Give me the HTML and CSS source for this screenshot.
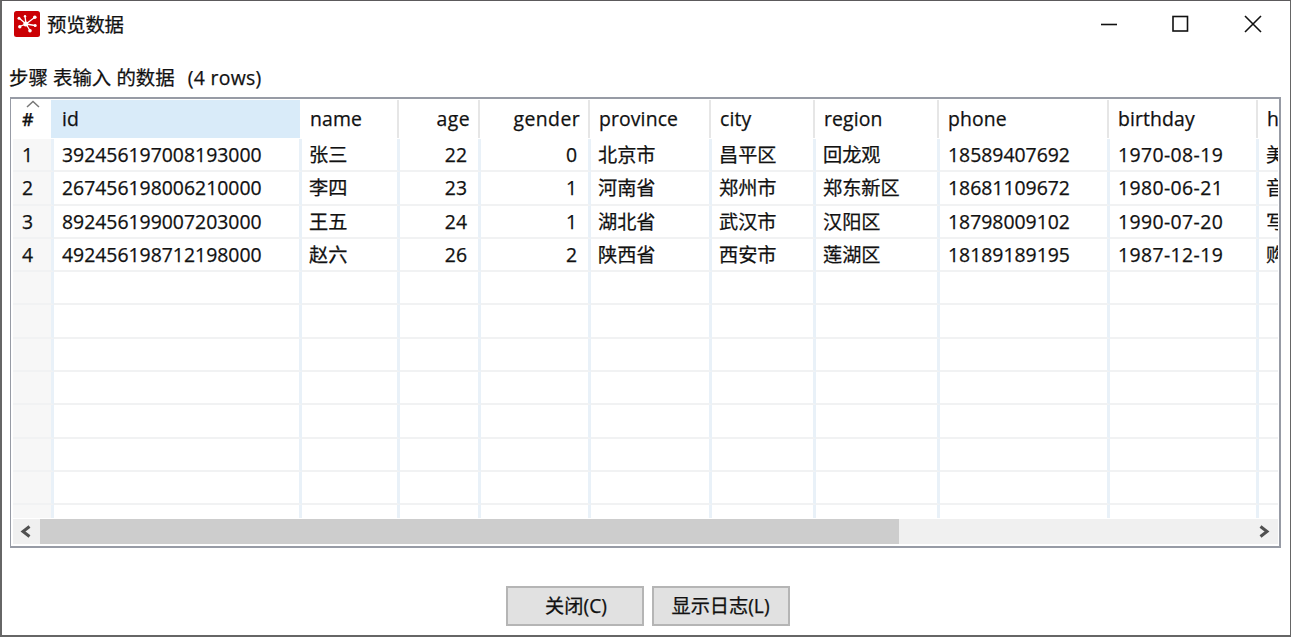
FILE: index.html
```html
<!DOCTYPE html>
<html lang="zh-CN">
<head>
<meta charset="utf-8">
<title>预览数据</title>
<link rel="stylesheet" href="styles.css">
</head>
<body>
<div class="window">
  <header class="titlebar">
    <svg class="app-icon" width="26" height="26" viewBox="0 0 26 26">
      <rect width="26" height="26" rx="2.500" fill="#cb0004"/>
      <path d="M12 13L5 7M12 13L11 5M12 13L20.500 6.500M12 13L21 14.500M12 13L16 19.500M12 13L5.500 15.500" stroke="#fff" stroke-width="1.300" fill="none"/>
      <g fill="#fff">
        <circle cx="11.800" cy="13" r="2.500"/>
        <circle cx="5" cy="7.200" r="1.500"/><circle cx="11" cy="5.200" r="1.200"/><circle cx="20.800" cy="6.300" r="1.800"/>
        <circle cx="21.200" cy="14.500" r="1.500"/><circle cx="16" cy="19.700" r="1.800"/><circle cx="5.800" cy="15.800" r="1.700"/>
      </g>
    </svg>
    <h1 class="title">预览数据</h1>
    <div class="controls">
      <svg width="18" height="18" viewBox="0 0 18 18"><path d="M1 9.500H17"/></svg>
      <svg width="18" height="18" viewBox="0 0 18 18"><rect x="1" y="1.500" width="14.500" height="14.500"/></svg>
      <svg width="18" height="18" viewBox="0 0 18 18"><path d="M1 1L17 17M17 1L1 17"/></svg>
    </div>
  </header>
  <p class="caption"><span>步骤 表输入 的数据</span><span class="caption-rows">(4 rows)</span></p>
  <section class="table-frame">
    <div class="grid head">
      <span class="mark"><svg width="14" height="8" viewBox="0 0 14 8"><path d="M1 7L7 1.500L13 7"/></svg>#</span>
      <span class="sorted">id</span><span>name</span><span class="num">age</span><span class="num">gender</span><span>province</span><span>city</span><span>region</span><span>phone</span><span>birthday</span><span>h</span>
    </div>
    <div class="body">
      <div class="grid row"><span>1</span><span>392456197008193000</span><span class="zh">张三</span><span class="num">22</span><span class="num">0</span><span class="zh">北京市</span><span class="zh">昌平区</span><span class="zh">回龙观</span><span>18589407692</span><span class="date">1970-08-19</span><span class="zh">美</span></div>
      <div class="grid row"><span>2</span><span>267456198006210000</span><span class="zh">李四</span><span class="num">23</span><span class="num">1</span><span class="zh">河南省</span><span class="zh">郑州市</span><span class="zh">郑东新区</span><span>18681109672</span><span class="date">1980-06-21</span><span class="zh">音</span></div>
      <div class="grid row"><span>3</span><span>892456199007203000</span><span class="zh">王五</span><span class="num">24</span><span class="num">1</span><span class="zh">湖北省</span><span class="zh">武汉市</span><span class="zh">汉阳区</span><span>18798009102</span><span class="date">1990-07-20</span><span class="zh">写</span></div>
      <div class="grid row"><span>4</span><span>492456198712198000</span><span class="zh">赵六</span><span class="num">26</span><span class="num">2</span><span class="zh">陕西省</span><span class="zh">西安市</span><span class="zh">莲湖区</span><span>18189189195</span><span class="date">1987-12-19</span><span class="zh">购</span></div>
      <div class="grid row"><span></span><span></span><span></span><span></span><span></span><span></span><span></span><span></span><span></span><span></span><span></span></div>
      <div class="grid row"><span></span><span></span><span></span><span></span><span></span><span></span><span></span><span></span><span></span><span></span><span></span></div>
      <div class="grid row"><span></span><span></span><span></span><span></span><span></span><span></span><span></span><span></span><span></span><span></span><span></span></div>
      <div class="grid row"><span></span><span></span><span></span><span></span><span></span><span></span><span></span><span></span><span></span><span></span><span></span></div>
      <div class="grid row"><span></span><span></span><span></span><span></span><span></span><span></span><span></span><span></span><span></span><span></span><span></span></div>
      <div class="grid row"><span></span><span></span><span></span><span></span><span></span><span></span><span></span><span></span><span></span><span></span><span></span></div>
      <div class="grid row"><span></span><span></span><span></span><span></span><span></span><span></span><span></span><span></span><span></span><span></span><span></span></div>
      <div class="grid row"><span></span><span></span><span></span><span></span><span></span><span></span><span></span><span></span><span></span><span></span><span></span></div>
    </div>
    <div class="scrollbar">
      <svg width="27" height="25" viewBox="0 0 27 25"><path d="M16.500 7.500L10 12.500L16.500 17.500"/></svg>
      <div class="thumb"></div>
      <svg class="right" width="27" height="25" viewBox="0 0 27 25"><path d="M9.500 7.500L16 12.500L9.500 17.500"/></svg>
    </div>
  </section>
  <footer class="actions">
    <button class="btn" type="button">关闭(C)</button>
    <button class="btn" type="button">显示日志(L)</button>
  </footer>
</div>
</body>
</html>
```
FILE: styles.css
```css
* { box-sizing: border-box; }
body {
  margin: 0;
  background: #fff;
  color: #111;
  font-family: "Open Sans", "Noto Sans CJK SC", sans-serif;
  font-size: 19.4px;
  -webkit-text-stroke: 0.25px #111;
}
.window {
  display: flex;
  flex-direction: column;
  width: 1291px;
  height: 637px;
  overflow: hidden;
  border: 1px solid #666;
  border-width: 1px 1px 2px 2px;
  border-top-color: #5c5a5c;
}
.titlebar {
  display: flex;
  align-items: center;
  height: 46px;
  padding-left: 12px;
}
.title {
  margin: 0 0 0 7px;
  padding-top: 2px;
  font-size: 19.4px;
  font-weight: 400;
  line-height: 28px;
  letter-spacing: -0.2px;
}
.controls {
  display: flex;
  gap: 54px;
  margin-left: auto;
  padding-right: 28px;
}
.controls svg {
  fill: none;
  stroke: #111;
  stroke-width: 1.6;
}
.caption {
  display: flex;
  gap: 13px;
  height: 50px;
  margin: 0;
  padding: 16px 0 0 7px;
  line-height: 30px;
  letter-spacing: 0.05px;
  white-space: pre;
}
.caption-rows { letter-spacing: 0.3px; }
.table-frame {
  flex: none;
  width: 1271px;
  height: 451px;
  margin-left: 8px;
  padding: 1px 1px 2px;
  border: 2px solid #979ba5;
  border-left-width: 1px;
  overflow: hidden;
}
.head, .body, .scrollbar { margin-left: 1px; }
.grid {
  display: grid;
  grid-template-columns: 40px 248px 98px 81px 110px 121px 104px 124px 170px 149px 20px;
  white-space: nowrap;
}
.grid > span {
  padding-left: 9px;
  border-right: 3px solid #e9f1f8;
  overflow: hidden;
}
.head {
  height: 39px;
  line-height: 38px;
  letter-spacing: 0.12px;
}
.head > span {
  height: 38px;
  border-right: 2px solid #e6e6e6;
}
.head > .num {
  padding: 0 8px 0 0;
  letter-spacing: 0.4px;
  text-align: right;
}
.head > .mark {
  position: relative;
  border: 0;
  font-size: 18px;
  font-weight: 600;
}
.mark svg {
  position: absolute;
  top: 0;
  left: 13px;
  fill: none;
  stroke: #777;
  stroke-width: 1.5;
}
.head > .sorted {
  position: relative;
  margin: 0 1px 0 -2px;
  padding-left: 11px;
  border: 0;
  background: #d9ebf9;
}
.body {
  height: 379px;
  overflow: hidden;
}
.row {
  grid-template-columns: 41px 248px 98px 81px 110px 121px 104px 124px 170px 149px 19px;
  height: 33.3px;
  line-height: 32px;
}
.row > span {
  padding-left: 8px;
  border-bottom: 2px solid #f1f2f3;
}
.row > .zh {
  padding-left: 7px;
  font-size: 19.2px;
}
.row > .num {
  padding: 0 11px 0 0;
  text-align: right;
}
.row > .date { letter-spacing: 0.4px; }
.row > span:first-child {
  padding-left: 9px;
  background: #f7f7f7;
  font-weight: 500;
}
.grid > span:last-child { border-right: 0; }
.scrollbar {
  display: flex;
  height: 25px;
  margin-top: 1px;
  background: #f0f0f0;
}
.scrollbar svg {
  fill: none;
  stroke: #505050;
  stroke-width: 3;
}
.thumb {
  width: 859px;
  background: #cdcdcd;
}
.right { margin-left: auto; }
.actions {
  display: flex;
  justify-content: center;
  gap: 8px;
  padding: 38px 0 0 3px;
}
.btn {
  width: 138px;
  height: 40px;
  padding: 0 0 0 3px;
  border: 2px solid #b5b5b5;
  background: #e1e1e1;
  color: #111;
  font: inherit;
  font-size: 19.2px;
  line-height: 34px;
}
.btn + .btn { padding: 0; }
```
